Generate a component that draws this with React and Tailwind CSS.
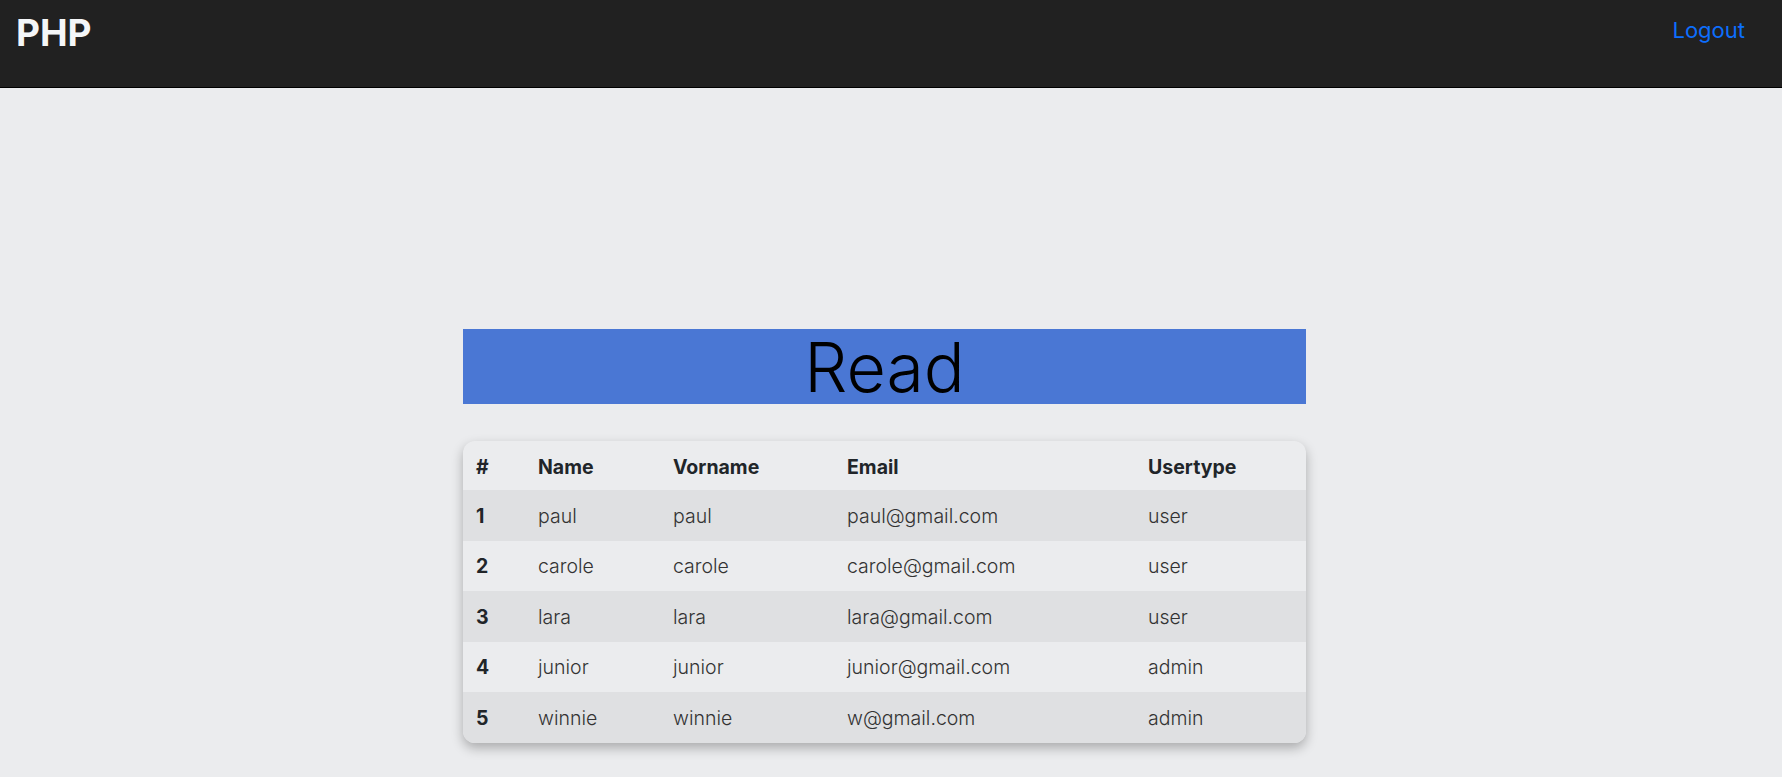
import React from "react";

const users = [
  { id: 1, name: "paul", vorname: "paul", email: "paul@gmail.com", type: "user" },
  { id: 2, name: "carole", vorname: "carole", email: "carole@gmail.com", type: "user" },
  { id: 3, name: "lara", vorname: "lara", email: "lara@gmail.com", type: "user" },
  { id: 4, name: "junior", vorname: "junior", email: "junior@gmail.com", type: "admin" },
  { id: 5, name: "winnie", vorname: "winnie", email: "w@gmail.com", type: "admin" },
];

const App = () => {
  return (
    <div className="min-h-[777px] bg-[#ebecee] font-['Inter',sans-serif]">
      {/* Navbar */}
      <nav className="h-[88px] bg-[#212121] border-b border-black flex items-start justify-between">
        <a className="ml-[16px] mt-[5px] text-[37px] font-bold text-[#f4f6f8]">PHP</a>
        <a className="mr-[37px] mt-[14px] text-[22px] text-[#0d6efd]">Logout</a>
      </nav>

      <main className="pl-[463px] pt-[241px]">
        {/* Title */}
        <div className="w-[843px] h-[75px] bg-[#4a77d4] flex items-center justify-center">
          <h1 className="text-[68px] font-light text-black leading-none">Read</h1>
        </div>

        {/* Table */}
        <div className="mt-[37px] w-[843px] rounded-xl overflow-hidden shadow-[0_5px_12px_rgba(0,0,0,0.28)]">
          <table className="w-full table-fixed text-[19.5px] text-left border-collapse">
            <colgroup>
              <col className="w-[75px]" />
              <col className="w-[135px]" />
              <col className="w-[174px]" />
              <col className="w-[301px]" />
              <col />
            </colgroup>
            <thead>
              <tr className="h-[49px] text-[#212529]">
                <th className="pl-[13px] pt-[4px] font-bold">#</th>
                <th className="pt-[4px] font-bold">Name</th>
                <th className="pt-[4px] font-bold">Vorname</th>
                <th className="pt-[4px] font-bold">Email</th>
                <th className="pt-[4px] font-bold">Usertype</th>
              </tr>
            </thead>
            <tbody>
              {users.map((u, i) => (
                <tr
                  key={u.id}
                  className={`h-[50.5px] text-[#333] ${i % 2 === 0 ? "bg-[#dfe0e2]" : "bg-[#ebecee]"}`}
                >
                  <th className="pl-[13px] pt-[2px] font-bold text-[#212529]">{u.id}</th>
                  <td className="pt-[2px] font-light">{u.name}</td>
                  <td className="pt-[2px] font-light">{u.vorname}</td>
                  <td className="pt-[2px] font-light">{u.email}</td>
                  <td className="pt-[2px] font-light">{u.type}</td>
                </tr>
              ))}
            </tbody>
          </table>
        </div>
      </main>
    </div>
  );
};

export default App;
